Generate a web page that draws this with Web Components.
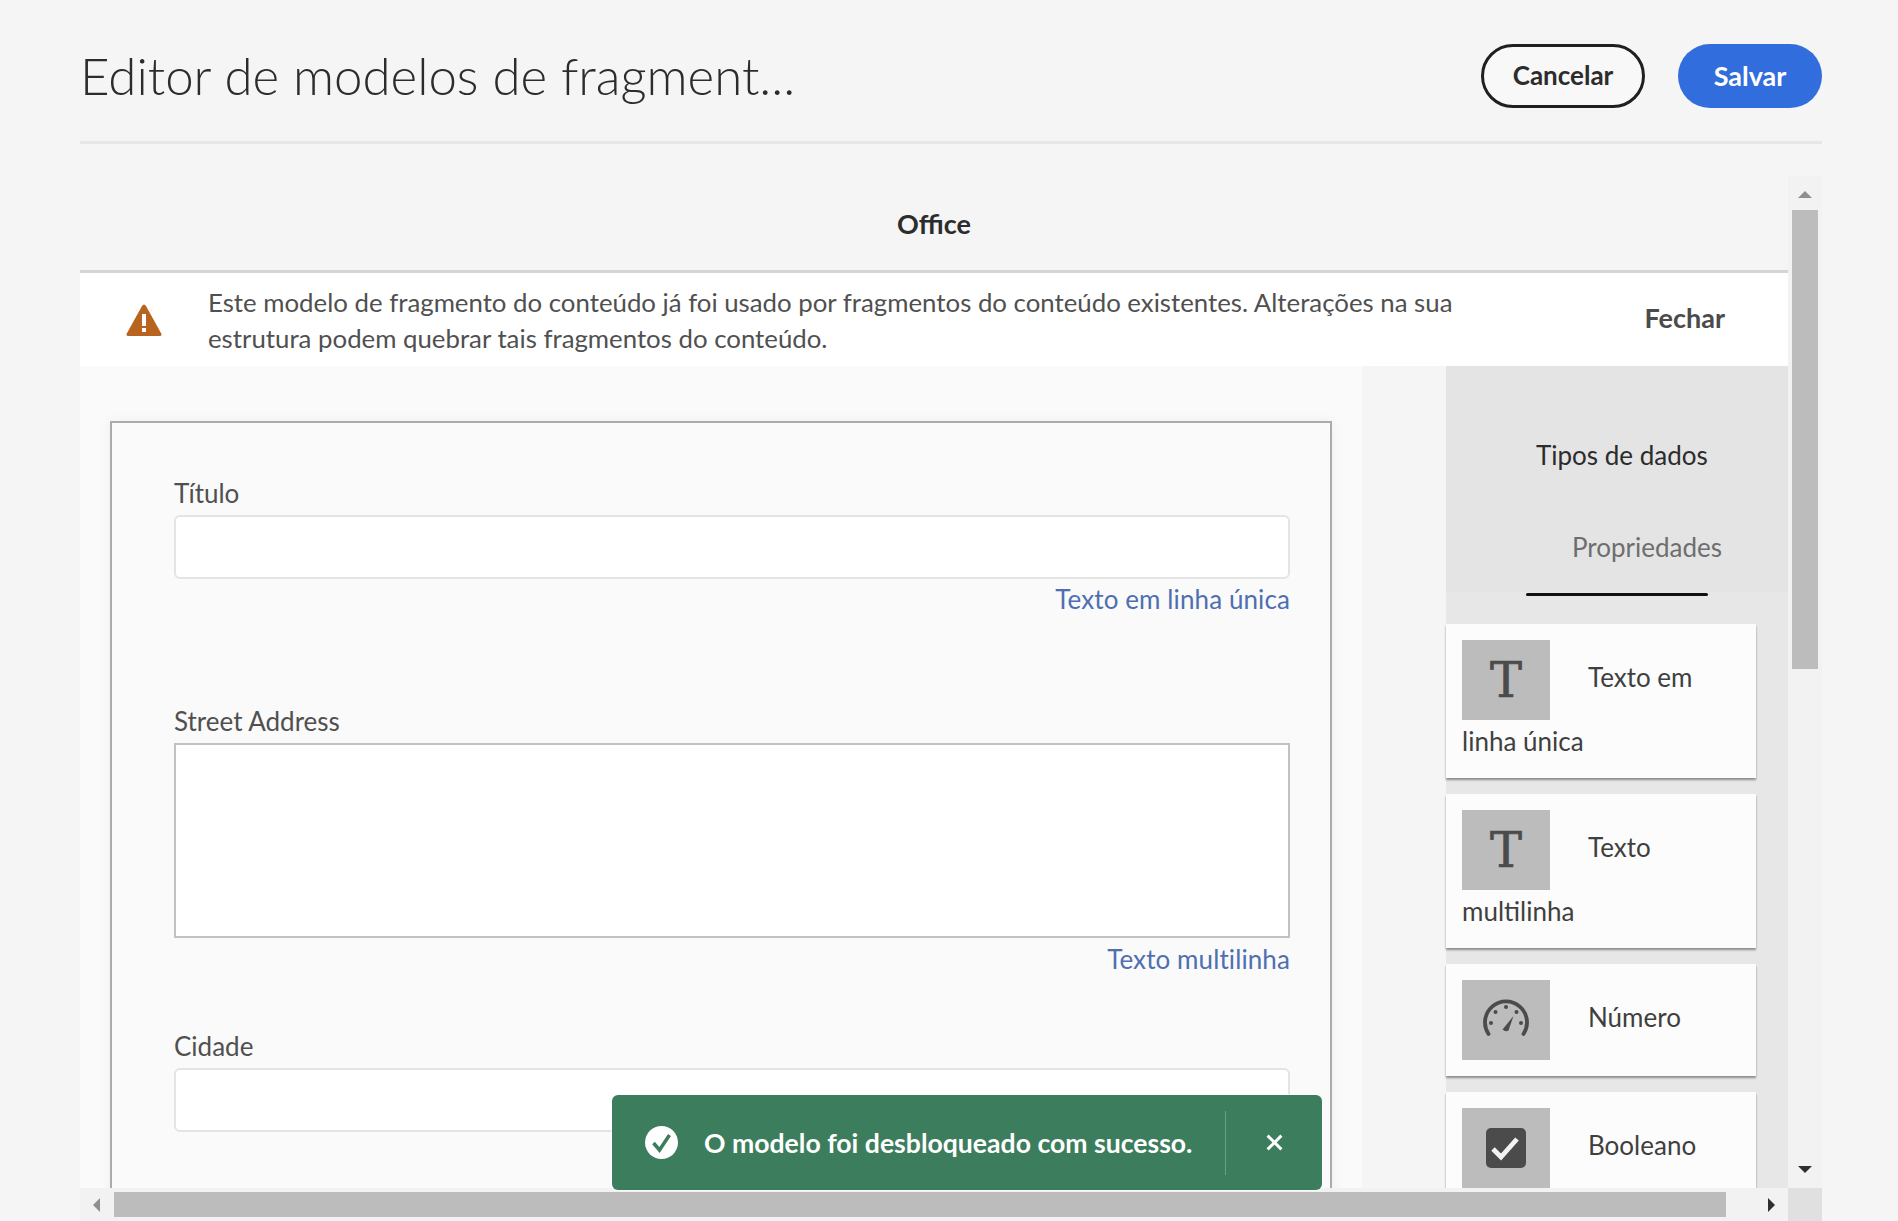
<!DOCTYPE html>
<html lang="pt"><head><meta charset="utf-8"><title>Editor de modelos de fragmento</title>
<style>
html,body{margin:0;height:1221px;overflow:hidden;background:#f5f5f5}
body{font-family:"Lato","Open Sans",sans-serif;color:#4b4b4b;position:relative}
.glyph{font:48px/80px 'DejaVu Serif',serif;color:#4b4b4b;display:block;text-align:center;-webkit-text-stroke:.7px #4b4b4b}
</style></head><body>
<editor-page>
  <page-header slot="header" heading="Editor de modelos de fragment...">
    <ui-button>Cancelar</ui-button>
    <ui-button primary>Salvar</ui-button>
  </page-header>
  <scroll-frame slot="main">
    <section-title>Office</section-title>
    <warn-banner><span>Este modelo de fragmento do conteúdo já foi usado por fragmentos do conteúdo existentes. Alterações na sua estrutura podem quebrar tais fragmentos do conteúdo.</span></warn-banner>
    <model-workspace>
      <form-sheet slot="form">
        <form-field label="Título" hint="Texto em linha única" style="margin-bottom:91px"></form-field>
        <form-field label="Street Address" hint="Texto multilinha" multi style="margin-bottom:56px"></form-field>
        <form-field label="Cidade"></form-field>
      </form-sheet>
      <types-panel slot="panel">
        <type-card><span slot="icon" class="glyph">T</span><span>Texto em</span> <span>linha única</span></type-card>
        <type-card><span slot="icon" class="glyph">T</span><span>Texto</span> <span>multilinha</span></type-card>
        <type-card><svg slot="icon" width="88" height="80" viewBox="0 0 88 80" style="display:block"><g transform="translate(20,18)"><path d="M6.500 36A21 21 0 1 1 41.500 36" fill="none" stroke="#4b4b4b" stroke-width="3.800" stroke-linecap="round"/><g fill="#4b4b4b"><circle cx="9" cy="25" r="2"/><circle cx="13.500" cy="14" r="2"/><circle cx="24" cy="9" r="2"/><circle cx="34.500" cy="14" r="2"/><circle cx="39" cy="25" r="2"/></g><path d="M31.500 18L26.500 32.500Q23.500 34.500 20.500 31.500Z" fill="#4b4b4b"/></g></svg>Número</type-card>
        <type-card><svg slot="icon" width="88" height="80" viewBox="0 0 88 80" style="display:block"><rect x="24" y="20" width="40" height="40" rx="5" fill="#4b4b4b"/><path d="M31 41l8 8 16-18" fill="none" stroke="#f2f2f2" stroke-width="4.800"/></svg>Booleano</type-card>
      </types-panel>
    </model-workspace>
  </scroll-frame>
</editor-page>
<toast-message>O modelo foi desbloqueado com sucesso.</toast-message>
<script>
function def(name, html){
  customElements.define(name, class extends HTMLElement{
    connectedCallback(){
      if(this.shadowRoot) return;
      const r=this.attachShadow({mode:'open'});
      r.innerHTML=typeof html==='function'?html(this):html;
    }
  });
}
def('editor-page',`<style>:host{display:flex;flex-direction:column;height:1221px;padding-left:80px;width:1742px;box-sizing:content-box}</style><slot name="header"></slot><slot name="main"></slot>`);
def('page-header',h=>`<style>
:host{display:flex;align-items:center;justify-content:space-between;height:130px;padding-top:11px;border-bottom:3px solid #e6e6e6;margin-bottom:32px;flex:none;box-sizing:content-box}
h1{margin:0;font:300 51px/64px "Lato",sans-serif;color:#2c2c2c}
.a{display:flex;gap:33px;align-items:center}
</style><h1>${h.getAttribute('heading')}</h1><div class="a"><slot></slot></div>`);
def('ui-button',h=>`<style>
:host{display:block}
div{box-sizing:border-box;height:64px;border-radius:32px;display:flex;align-items:center;justify-content:center;padding-bottom:2px;font:700 26px "Lato",sans-serif;
${h.hasAttribute('primary')?'width:144px;background:#326ddd;color:#fff;font-size:27px;':'width:164px;border:3px solid #1f1f1f;color:#2c2c2c;background:#f8f8f8;'}}
</style><div><slot></slot></div>`);
def('scroll-frame',`<style>
:host{display:grid;grid-template-columns:1708px 34px;grid-template-rows:1012px 33px;flex:none}
.view{overflow:hidden;background:#f5f5f5}
.v{background:#f2f2f2;display:flex;flex-direction:column;align-items:center;position:relative}
.thumb-v{width:26px;height:459px;background:#bcbcbc;flex:none;margin-top:12px}
.up{width:0;height:0;border:7px solid transparent;border-top:0;border-bottom:7px solid #8f8f8f;margin-top:15px}
.down{width:0;height:0;border:7px solid transparent;border-bottom:0;border-top:7px solid #2f2f2f;margin-top:auto;margin-bottom:15px}
.h{background:#f2f2f2;display:flex;align-items:center;padding-left:13px;box-sizing:border-box}
.left{width:0;height:0;border:7px solid transparent;border-left:0;border-right:7px solid #8f8f8f}
.thumb-h{width:1612px;height:25px;background:#bcbcbc;margin-left:14px}
.right{width:0;height:0;border:7px solid transparent;border-right:0;border-left:7px solid #2f2f2f;margin-left:42px}
.corner{background:#e0e0e0}
</style>
<div class="view"><slot></slot></div>
<div class="v"><i class="up"></i><i class="thumb-v"></i><i class="down"></i></div>
<div class="h"><i class="left"></i><i class="thumb-h"></i><i class="right"></i></div>
<div class="corner"></div>`);
def('section-title',`<style>
:host{display:flex;align-items:center;justify-content:center;height:94px;border-bottom:3px solid #d5d5d5;font:700 27px "Lato",sans-serif;color:#2c2c2c}
</style><slot></slot>`);
def('warn-banner',`<style>
:host{display:flex;align-items:center;height:93px;background:#fff;padding-left:46px;padding-right:63px;box-sizing:border-box}
svg{flex:none;margin-right:46px;margin-top:1px}
p{margin:0;width:1290px;font:400 25.800px/36px "Lato",sans-serif;color:#505050}
b{margin-left:auto;font:700 27px "Lato",sans-serif;color:#4b4b4b;margin-top:-4px}
</style>
<svg width="36" height="32" viewBox="0 0 36 32"><path d="M18 0.500Q19 .5 20 2L35.500 30Q36 32 34 32H2Q0 32 .5 30L16 2Q17 .5 18 .5Z" fill="#b8641f"/><rect x="16" y="10" width="4" height="12" fill="#fff"/><rect x="16" y="24" width="4" height="4" fill="#fff"/></svg>
<p><slot></slot></p><b>Fechar</b>`);
def('model-workspace',`<style>
:host{display:flex;background:#f5f5f5}
.l{width:1282px;background:#fafafa;flex:none;padding:55px 30px 0 30px;box-sizing:border-box}
.r{margin-left:84px;width:342px;flex:none}
</style><div class="l"><slot name="form"></slot></div><div class="r"><slot name="panel"></slot></div>`);
def('form-sheet',`<style>
:host{display:block;border:2px solid #ababab;border-bottom:0;background:#fafafa;padding:54px 40px 120px 62px;box-shadow:0 0 12px rgba(0,0,0,.05)}
</style><slot></slot>`);
def('form-field',h=>{
  const multi=h.hasAttribute('multi'), hint=h.getAttribute('hint');
  return `<style>
:host{display:block}
label{display:block;font:400 26px/32px "Lato",sans-serif;color:#505050;margin-bottom:6px}
.box{box-sizing:border-box;background:#fff;${multi?'height:195px;border:2px solid #c2c2c2;':'height:64px;border:2px solid #e4e4e4;border-radius:6px;'}}
.hint{text-align:right;font:400 26px/30px "Lato",sans-serif;letter-spacing:.1px;color:#4f6fb0;margin-top:${multi?6:5}px}
</style><label>${h.getAttribute('label')}</label><div class="box"></div>${hint?`<div class="hint">${hint}</div>`:''}`;
});
def('types-panel',`<style>
:host{display:block;background:#e7e7e7;height:830px}
.tabs{background:#e4e4e4;padding-top:43px;height:183px;box-sizing:content-box;position:relative;font:400 26px/92px "Lato",sans-serif}
.t1{padding-left:90px;color:#2c2c2c}.t2{padding-left:126px;color:#6e6e6e}
.ind{width:182px;height:3px;background:#111;margin-left:80px;border-radius:2px;margin-top:1px}
.list{padding:28px 32px 0 0;display:flex;flex-direction:column;gap:16px}
</style><div class="tabs"><div class="t1">Tipos de dados</div><div class="t2">Propriedades</div></div><div class="ind"></div><div class="list"><slot></slot></div>`);
def('type-card',`<style>
:host{display:flow-root;box-sizing:border-box;background:#fcfcfc;box-shadow:0 2px 2px rgba(0,0,0,.4);padding:16px 16px 5px;min-height:112px;font:400 26px/64px "Lato",sans-serif;color:#3f3f3f}
.i{float:left;width:88px;height:80px;background:#bcbcbc;margin:0 38px -14px 0}
p{margin:0;padding-top:5px}
</style><div class="i"><slot name="icon"></slot></div><p><slot></slot></p>`);
def('toast-message',`<style>
:host{position:absolute;left:612px;top:1095px;width:710px;height:95px;box-sizing:border-box;background:#3b7d5c;border-radius:6px;box-shadow:0 0 0 1px rgba(255,255,255,.5);display:flex;align-items:center;padding-left:33px;color:#fff;font:700 26.600px "Lato",sans-serif}
svg{flex:none}
.t{margin-left:26px;width:494px;white-space:nowrap}
.d{width:1px;height:64px;background:rgba(255,255,255,.25);margin-left:27px}
.x{margin-left:40px}
</style>
<svg width="33" height="33" viewBox="0 0 33 33"><circle cx="16.500" cy="16.500" r="16.500" fill="#fff"/><path d="M8.500 17l6 7 10-15" fill="none" stroke="#3b7d5c" stroke-width="3.500"/></svg>
<span class="t"><slot></slot></span><i class="d"></i>
<svg class="x" width="17" height="17" viewBox="0 0 16 16"><path d="M1.500 1.500l13 13M14.500 1.500l-13 13" stroke="#fff" stroke-width="2.800"/></svg>`);
</script>
</body></html>
